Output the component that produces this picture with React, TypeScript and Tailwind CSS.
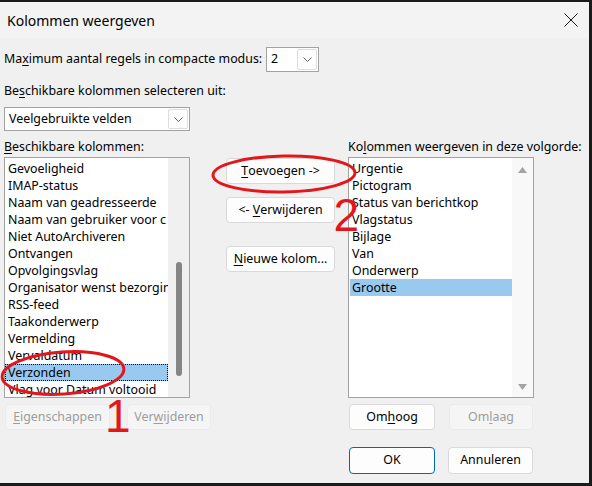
import React from "react";

const FONT = "font-['Noto_Sans','Open_Sans','DejaVu_Sans',sans-serif]";

const AVAILABLE = [
  "Gevoeligheid",
  "IMAP-status",
  "Naam van geadresseerde",
  "Naam van gebruiker voor c",
  "Niet AutoArchiveren",
  "Ontvangen",
  "Opvolgingsvlag",
  "Organisator wenst bezorgin",
  "RSS-feed",
  "Taakonderwerp",
  "Vermelding",
  "Vervaldatum",
  "Verzonden",
  "Vlag voor Datum voltooid",
];

const SHOWN = [
  "Urgentie",
  "Pictogram",
  "Status van berichtkop",
  "Vlagstatus",
  "Bijlage",
  "Van",
  "Onderwerp",
  "Grootte",
];

function Chevron() {
  return (
    <svg width="9" height="5" viewBox="0 0 9 5" fill="none">
      <path d="M0.5 0.5 L4.5 4.5 L8.5 0.5" stroke="#606060" strokeWidth="1" />
    </svg>
  );
}

function Combo({ value, width }: { value: string; width: string }) {
  return (
    <div className={`flex h-full items-stretch border border-[#a2a2a2] bg-white p-[1px] ${width}`}>
      <span className="flex flex-1 items-center pl-[3px] whitespace-nowrap">{value}</span>
      <span className="flex w-[20px] items-center justify-center rounded-[2px] border border-[#dedede] bg-[#fdfdfd]">
        <Chevron />
      </span>
    </div>
  );
}

function Btn({
  children,
  width,
  disabled,
  primary,
}: {
  children: React.ReactNode;
  width: string;
  disabled?: boolean;
  primary?: boolean;
}) {
  const look = disabled
    ? "border-[#ebebeb] bg-[#f5f5f5] text-[#9d9d9d]"
    : primary
      ? "border-[#0067c0] bg-[#fdfdfd] text-black"
      : "border-[#d9d9d9] bg-[#fdfdfd] text-black";
  return (
    <div className={`flex h-[26px] items-center justify-center rounded-[4px] border whitespace-nowrap ${width} ${look}`}>
      {children}
    </div>
  );
}

function U({ children }: { children: React.ReactNode }) {
  return <span className="underline decoration-1 underline-offset-[2px]">{children}</span>;
}

function Triangle({ up }: { up?: boolean }) {
  return (
    <svg width="9" height="6" viewBox="0 0 9 6">
      <path d={up ? "M0 6 L4.5 0 L9 6 Z" : "M0 0 L4.5 6 L9 0 Z"} fill="#a3a3a3" />
    </svg>
  );
}

export default function App() {
  return (
    <div className={`relative h-[486px] w-[592px] bg-[#1b1b1b] pt-[2px] pr-[3px] pb-[3px] text-[12.4px] text-black ${FONT}`}>
      <div className="flex h-full flex-col bg-[#f0f0f0]">
        {/* title bar */}
        <div className="flex h-[36px] items-center justify-between bg-[#f3f3f3] pl-[7px] pr-[11px]">
          <span className="text-[14px]">Kolommen weergeven</span>
          <svg width="14" height="14" viewBox="0 0 14 14">
            <path d="M0.5 0.5 L13.5 13.5 M13.5 0.5 L0.5 13.5" stroke="#1a1a1a" strokeWidth="1" />
          </svg>
        </div>

        <div className="flex flex-col px-[4px]">
          <div className="mt-[9px] flex h-[25px] items-center">
            <span className="w-[262px] whitespace-nowrap">
              Ma<U>x</U>imum aantal regels in compacte modus:
            </span>
            <Combo value="2" width="w-[53px]" />
          </div>

          <div className="mt-[10px] leading-[17px]">
            Be<U>s</U>chikbare kolommen selecteren uit:
          </div>

          <div className="mt-[8px] h-[24px]">
            <Combo value="Veelgebruikte velden" width="w-[186px]" />
          </div>

          <div className="mt-[7px] flex">
            {/* left column */}
            <div className="flex w-[186px] flex-col">
              <div className="leading-[17px] whitespace-nowrap">
                <U>B</U>eschikbare kolommen:
              </div>
              <div className="mt-[2px] flex h-[241px] border border-[#a2a2a2] bg-white">
                <div className="flex-1 overflow-hidden pt-[2px]">
                  {AVAILABLE.map((item) => (
                    <div
                      key={item}
                      className={
                        item === "Verzonden"
                          ? "h-[17px] border border-dotted border-black bg-[#99c9ef] pl-[2px] leading-[15px] whitespace-nowrap"
                          : "h-[17px] pl-[3px] leading-[17px] whitespace-nowrap"
                      }
                    >
                      {item}
                    </div>
                  ))}
                </div>
                <div className="flex w-[21px] justify-center bg-[#f0f0f0] pt-[104px]">
                  <div className="h-[114px] w-[6px] rounded-full bg-[#858585]" />
                </div>
              </div>
              <div className="mt-[6px] flex gap-[17px] pl-[1px]">
                <Btn width="w-[105px] shrink-0" disabled>
                  <U>E</U>igenschappen
                </Btn>
                <Btn width="w-[84px] shrink-0" disabled>
                  Ver<U>w</U>ijderen
                </Btn>
              </div>
            </div>

            {/* middle column */}
            <div className="ml-[36px] flex w-[109px] flex-col pt-[20px]">
              <Btn width="w-full">
                <U>T</U>oevoegen -&gt;
              </Btn>
              <div className="mt-[13px]">
                <Btn width="w-full">
                  {"<-\u00a0"}
                  <U>V</U>erwijderen
                </Btn>
              </div>
              <div className="mt-[23px]">
                <Btn width="w-full">
                  <U>N</U>ieuwe kolom...
                </Btn>
              </div>
            </div>

            {/* right column */}
            <div className="ml-[13px] flex w-[186px] flex-col">
              <div className="leading-[17px] whitespace-nowrap">
                Ko<U>l</U>ommen weergeven in deze volgorde:
              </div>
              <div className="mt-[2px] flex h-[241px] border border-[#a2a2a2] bg-white">
                <div className="flex-1 overflow-hidden pt-[2px] pl-[1px]">
                  {SHOWN.map((item) => (
                    <div
                      key={item}
                      className={`h-[17px] pl-[2px] leading-[17px] whitespace-nowrap ${
                        item === "Grootte" ? "bg-[#99c9ef]" : ""
                      }`}
                    >
                      {item}
                    </div>
                  ))}
                </div>
                <div className="flex w-[21px] flex-col items-center justify-between bg-[#f8f8f8] pt-[9px] pb-[7px]">
                  <Triangle up />
                  <Triangle />
                </div>
              </div>
              <div className="mt-[6px] flex gap-[14px] pl-[1px]">
                <Btn width="w-[86px]">
                  Om<U>h</U>oog
                </Btn>
                <Btn width="w-[84px]" disabled>
                  Om<U>l</U>aag
                </Btn>
              </div>
              <div className="mt-[17px] flex gap-[13px] pl-[1px]">
                <Btn width="w-[86px] h-[27px]" primary>
                  OK
                </Btn>
                <Btn width="w-[85px] h-[27px]">Annuleren</Btn>
              </div>
            </div>
          </div>
        </div>
      </div>

      {/* red annotations drawn on top of the screenshot */}
      <svg className="pointer-events-none absolute inset-0" width="592" height="486" viewBox="0 0 592 486">
        <ellipse cx="284" cy="174" rx="71" ry="18" fill="none" stroke="#e3161b" strokeWidth="3" transform="rotate(-1 284 174)" />
        <ellipse cx="63" cy="373" rx="61" ry="21" fill="none" stroke="#e3161b" strokeWidth="3" transform="rotate(-4 63 373)" />
        <text x="333.5" y="231" fontSize="46" fill="#e3161b" fontFamily="'Liberation Sans', Arial, sans-serif">
          2
        </text>
        <text x="105" y="432" fontSize="46" fill="#e3161b" fontFamily="'Liberation Sans', Arial, sans-serif">
          1
        </text>
      </svg>
    </div>
  );
}
